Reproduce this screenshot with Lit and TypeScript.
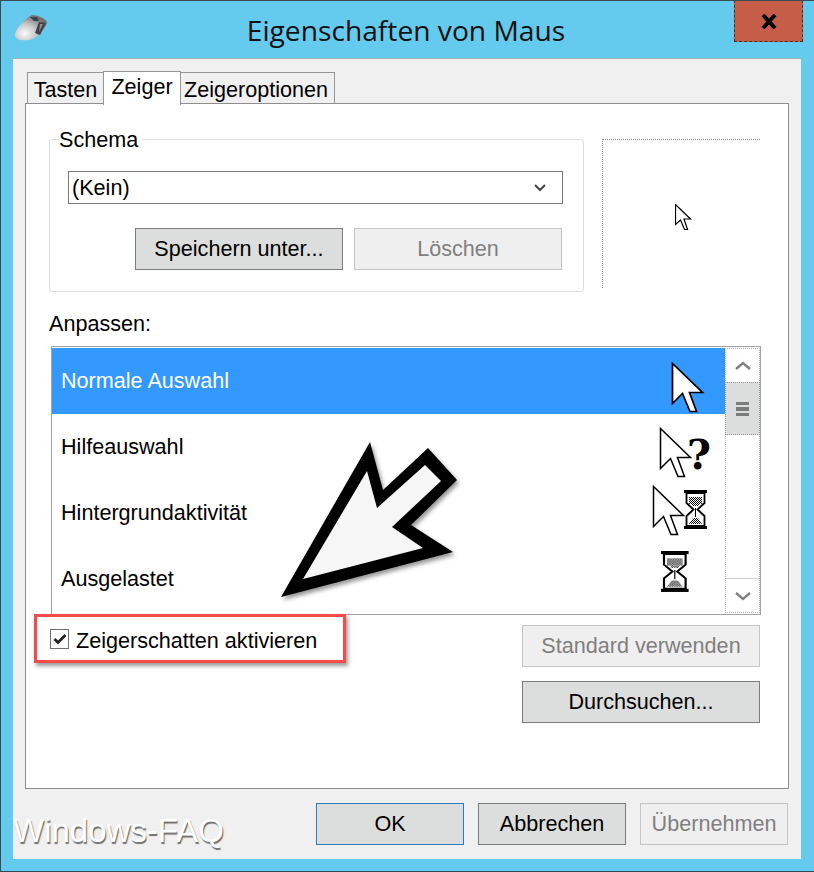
import { LitElement, html, css, svg } from "lit";
import { customElement } from "lit/decorators.js";

const arrow = (x: number, y: number, w = 1.5) => svg`
  <path transform="translate(${x} ${y})" d="M.5 .5V40.5L10.5 30.5L18 48.5H24.5L17.5 29.5H30.5Z" fill="#fff" stroke="#000" stroke-width=${w}/>`;

const glass = (x: number, y: number, sx = 1, sy = 1) => svg`
  <g transform="translate(${x} ${y}) scale(${sx} ${sy})">
    <path d="M2.5 3H20.5V13L13.5 19.5L20.5 26V36H2.5V26L9.5 19.5L2.5 13Z" fill="#fff" stroke="#000" stroke-width="1.8"/>
    <rect x="0" y="0" width="23" height="3" fill="#000"/>
    <rect x="0" y="36" width="23" height="3" fill="#000"/>
    <rect x="5" y="7" width="13" height="7" fill="url(#sand)"/>
    <path d="M8 14H15V16H8Z" fill="url(#sand)"/>
    <path d="M11 18H12V27H11Z" fill="#000"/>
    <path d="M9 28H14L18 34H5Z" fill="url(#sand)"/>
  </g>`;

const defs = svg`<defs><pattern id="sand" width="2" height="2" patternUnits="userSpaceOnUse">
  <rect width="2" height="2" fill="#fff"/><rect width="1" height="1" fill="#000"/><rect x="1" y="1" width="1" height="1" fill="#000"/>
</pattern></defs>`;

@customElement("app-root")
export class AppRoot extends LitElement {
  static styles = css`
    :host {
      display: block;
      position: relative;
      width: 814px;
      height: 872px;
      box-sizing: border-box;
      background: #65cbee;
      border-top: 1px solid #3a4a50;
      border-left: 1px solid #3a4a50;
      border-bottom: 1px solid #2c4a55;
      font-family: "Liberation Sans", Arial, sans-serif;
      font-size: 21.6px;
      color: #000;
      overflow: hidden;
    }
    .titlebar {
      display: grid;
      grid-template-columns: 1fr auto 1fr;
      height: 57px;
      align-items: start;
    }
    .appicon { margin: 12px 0 0 13px; display: block; }
    .title {
      font-family: "Open Sans", "Noto Sans", sans-serif;
      font-size: 28.2px;
      line-height: 58px;
      color: #111;
      margin-left: -3px;
      white-space: nowrap;
    }
    .close {
      justify-self: end;
      width: 69px;
      height: 42px;
      margin-top: -1px;
      margin-right: 11px;
      box-sizing: border-box;
      background: #c65d49;
      border: 1px dashed #4a2a22;
      display: flex;
      align-items: center;
      justify-content: center;
    }
    .client {
      margin-left: 12px;
      width: 788px;
      height: 801px;
      box-sizing: border-box;
      background: #f0f0f0;
      padding: 13px 12px 0;
      border-top: 1px solid #9fb4bc;
    }
    .tabs {
      display: flex;
      align-items: flex-end;
      height: 31px;
      padding-left: 2px;
    }
    .tab {
      box-sizing: border-box;
      height: 31px;
      line-height: 33px;
      background: #f0f0f0;
      border: 1px solid #969696;
      border-bottom: 0;
      text-align: center;
      margin-right: -1px;
      white-space: nowrap;
    }
    .tab.t1 { width: 77px; }
    .tab.t2 {
      width: 78px;
      height: 34px;
      line-height: 30px;
      margin-bottom: -2px;
      background: #fff;
      position: relative;
      z-index: 2;
    }
    .tab.t3 { width: 155px; padding-right: 3px; }
    .page {
      position: relative;
      box-sizing: border-box;
      width: 764px;
      height: 686px;
      background: #fff;
      border: 1px solid #8e8e8e;
      padding: 0 28px 0 23px;
      display: flex;
      flex-direction: column;
    }
    .top {
      display: flex;
      justify-content: space-between;
      height: 208px;
    }
    fieldset {
      box-sizing: border-box;
      width: 534px;
      height: 165px;
      margin: 23px 0 0 0;
      padding: 0 20px 0 18px;
      border: 1px solid #dedede;
      border-radius: 3px;
    }
    legend {
      padding: 1px 4px 0 0;
      margin-left: -9px;
      line-height: 23px;
    }
    .combo {
      box-sizing: border-box;
      height: 33px;
      width: 495px;
      margin-top: 20px;
      border: 1px solid #7a7a7a;
      padding: 0 16px 0 3px;
      line-height: 31px;
      display: flex;
      justify-content: space-between;
      align-items: center;
    }
    .schemabtns {
      display: flex;
      gap: 11px;
      margin: 24px 0 0 67px;
    }
    .btn {
      box-sizing: border-box;
      width: 208px;
      height: 42px;
      display: flex;
      align-items: center;
      justify-content: center;
      background: #dcdedd;
      border: 1px solid #7c7c7c;
      white-space: nowrap;
    }
    .btn.off { background: #efefef; border-color: #c4c4c4; color: #7f7f7f; }
    .btn.wide { width: 238px; }
    .btn.foot { width: 148px; }
    .btn.def { border-color: #2b7cb8; }
    .preview {
      box-sizing: border-box;
      width: 158px;
      height: 149px;
      margin-top: 35px;
      border-top: 1px dotted #8e8e8e;
      border-left: 1px dotted #8e8e8e;
      display: flex;
    }
    .preview svg { margin: 64px 0 0 72px; }
    .label { line-height: 24px; height: 34px; }
    .list {
      box-sizing: border-box;
      width: 710px;
      height: 269px;
      margin-left: 2px;
      border: 1px solid #a2a2a2;
      padding: 1px 0 0 0;
      display: flex;
    }
    .rows { width: 673px; flex: none; height: 265px; overflow: hidden; }
    .row {
      height: 66px;
      display: flex;
      align-items: center;
      justify-content: space-between;
      padding-left: 9px;
      box-sizing: border-box;
    }
    .row.sel { background: #3399ff; color: #fff; }
    .row svg { flex: none; display: block; }
    .scroll {
      box-sizing: border-box;
      width: 35px;
      height: 265px;
      border: 1px dotted #b4b4b4;
      display: flex;
      flex-direction: column;
    }
    .sbtn { height: 33px; display: flex; align-items: center; justify-content: center; flex: none; }
    .thumb {
      height: 53px;
      flex: none;
      box-sizing: border-box;
      background: #dcdedd;
      border: 1px dotted #9a9a9a;
      margin: 0 -1px;
      display: flex;
      align-items: center;
      justify-content: center;
    }
    .track { flex: 1; }
    .down { border-top: 1px solid #cfcfcf; }
    .lower {
      display: flex;
      justify-content: space-between;
      margin-top: 10px;
    }
    .check {
      display: flex;
      align-items: center;
      gap: 7px;
      height: 28px;
      margin: 0 0 0 1px;
      position: relative;
      z-index: 3;
    }
    .check span { padding-top: 3px; }
    .box {
      box-sizing: border-box;
      width: 19px;
      height: 20px;
      border: 1px solid #707070;
      display: flex;
      align-items: center;
      justify-content: center;
    }
    .rbtns { display: flex; flex-direction: column; gap: 14px; }
    .highlight {
      position: absolute;
      left: 8px;
      top: 510px;
      width: 312px;
      height: 49px;
      box-sizing: border-box;
      border: 3px solid #f44b4d;
      background: #fff;
      box-shadow: 2px 3px 4px rgba(70, 70, 70, .55);
      z-index: 2;
    }
    .bigarrow { position: absolute; left: 239px; top: 324px; z-index: 4; overflow: visible; }
    .footer {
      display: flex;
      align-items: flex-start;
      justify-content: flex-end;
      gap: 14px;
      margin: 14px 1px 0 0;
    }
    .mark {
      margin-right: auto;
      margin-left: -12px;
      margin-top: 7px;
      font-size: 33px;
      line-height: 42px;
      height: 42px;
      color: #fff;
      text-shadow: 1px 2px 1px #6e6e6e;
      white-space: nowrap;
    }
  `;

  render() {
    return html`
      <div class="titlebar">
        <svg class="appicon" width="34" height="30" viewBox="0 0 34 30">
          <defs>
            <radialGradient id="m" cx=".3" cy=".72" r=".75">
              <stop offset="0" stop-color="#fbfbfb"/><stop offset=".5" stop-color="#c4c4c4"/><stop offset="1" stop-color="#6f6f6f"/>
            </radialGradient>
          </defs>
          <path d="M1 22C1 17 10 6 18 2C24 2 32 6 33 9C31 17 24 25 15 27C9 28 1 27 1 22Z" fill="url(#m)"/>
          <path d="M16 4L23 4L25 8L20 8ZM25 9L32 10L26 22L21 20Z" fill="#3f4048"/>
          <path d="M26 11L29 11L25 19Z" fill="#8b8d95"/>
        </svg>
        <div class="title">Eigenschaften von Maus</div>
        <div class="close">
          <svg width="16" height="15" viewBox="0 0 16 15"><path d="M2 1L14 14M14 1L2 14" stroke="#000" stroke-width="4" fill="none"/></svg>
        </div>
      </div>
      <div class="client">
        <div class="tabs">
          <div class="tab t1">Tasten</div>
          <div class="tab t2">Zeiger</div>
          <div class="tab t3">Zeigeroptionen</div>
        </div>
        <div class="page">
          <div class="top">
            <fieldset>
              <legend>Schema</legend>
              <div class="combo">
                <span>(Kein)</span>
                <svg width="12" height="8" viewBox="0 0 12 8"><path d="M1 1L6 6L11 1" stroke="#444" stroke-width="2" fill="none"/></svg>
              </div>
              <div class="schemabtns">
                <div class="btn">Speichern unter...</div>
                <div class="btn off">Löschen</div>
              </div>
            </fieldset>
            <div class="preview">
              <svg width="18" height="27" viewBox="0 0 18 27">
                <path d="M.5 .5V20.5L5.5 16L9.5 25.5H12.5L9 15H15.5Z" fill="#fff" stroke="#000" stroke-width="1.2"/>
              </svg>
            </div>
          </div>
          <div class="label">Anpassen:</div>
          <div class="list">
            <div class="rows">
              <div class="row sel"><span>Normale Auswahl</span>
                <svg width="80" height="66" viewBox="0 0 80 66">${arrow(27, 15, 1.7)}</svg></div>
              <div class="row"><span>Hilfeauswahl</span>
                <svg width="80" height="66" viewBox="0 0 80 66">
                  ${arrow(15, 14)}
                  <text x="42" y="55" font-family="'DejaVu Serif', serif" font-weight="700" font-size="41">?</text>
                </svg></div>
              <div class="row"><span>Hintergrundaktivität</span>
                <svg width="80" height="66" viewBox="0 0 80 66">
                  ${defs}${arrow(8, 6)}${glass(39, 10)}
                </svg></div>
              <div class="row"><span>Ausgelastet</span>
                <svg width="80" height="66" viewBox="0 0 80 66">${glass(16, 5, 1.2, 1.05)}</svg></div>
            </div>
            <div class="scroll">
              <div class="sbtn"><svg width="16" height="10" viewBox="0 0 16 10"><path d="M1 8L8 2L15 8" stroke="#808080" stroke-width="2.4" fill="none"/></svg></div>
              <div class="thumb"><svg width="13" height="14" viewBox="0 0 13 14"><path d="M0 0H13V3H0ZM0 5H13V9H0ZM0 11H13V14H0Z" fill="#7c7c7c"/></svg></div>
              <div class="track"></div>
              <div class="sbtn down"><svg width="16" height="10" viewBox="0 0 16 10"><path d="M1 2L8 8L15 2" stroke="#808080" stroke-width="2.4" fill="none"/></svg></div>
            </div>
          </div>
          <div class="lower">
            <div class="check">
              <div class="box"><svg width="14" height="12" viewBox="0 0 14 12"><path d="M1.5 6L5 9.5L12.5 2" stroke="#222" stroke-width="2.8" fill="none"/></svg></div>
              <span>Zeigerschatten aktivieren</span>
            </div>
            <div class="rbtns">
              <div class="btn wide off">Standard verwenden</div>
              <div class="btn wide">Durchsuchen...</div>
            </div>
          </div>
          <div class="highlight"></div>
          <svg class="bigarrow" width="190" height="170" viewBox="0 0 190 170">
            <g transform="translate(-265 -428)" style="filter: drop-shadow(2px 3px 2px rgba(60,60,60,.55))">
              <path d="M281 597L370 442L383 490L428 448L457 480L411 525L453 552Z" fill="#000"/>
              <path d="M303 579L367 471L377 508L425 465L441 481L392 527L423 548Z" fill="#f6f6f6"/>
            </g>
          </svg>
        </div>
        <div class="footer">
          <div class="mark">Windows-FAQ</div>
          <div class="btn foot def">OK</div>
          <div class="btn foot">Abbrechen</div>
          <div class="btn foot off">Übernehmen</div>
        </div>
      </div>
    `;
  }
}
